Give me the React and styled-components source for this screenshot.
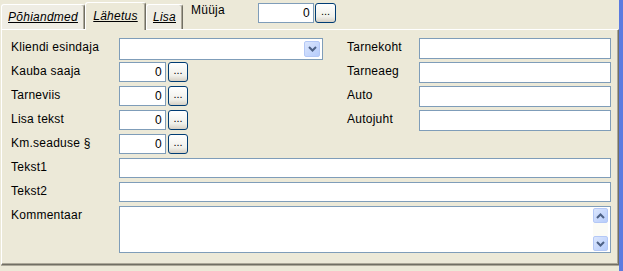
import React from 'react';
import styled, { createGlobalStyle } from 'styled-components';

const GlobalStyle = createGlobalStyle`
  body {
    margin: 0;
    background: #ece9d8;
    font-family: "Liberation Sans", Arial, sans-serif;
    font-size: 12px;
    letter-spacing: 0.25px;
    color: #000;
  }
`;

const Window = styled.div`
  width: 623px;
  height: 271px;
  box-sizing: border-box;
  border-right: 4px solid #5b7be0;
  background: #ece9d8;
  display: flex;
  flex-direction: column;
`;

const TopBar = styled.div`
  height: 29px;
  display: flex;
  align-items: flex-end;
  padding-left: 1px;
  position: relative;
  z-index: 1;
`;

const Tab = styled.div`
  box-sizing: border-box;
  width: ${p => p.$w}px;
  height: ${p => (p.$active ? 28 : 25)}px;
  margin-bottom: ${p => (p.$active ? -1 : 0)}px;
  padding-top: ${p => (p.$active ? 6 : 5)}px;
  text-align: center;
  line-height: 14px;
  font-style: italic;
  text-decoration: underline;
  background: ${p => (p.$active ? '#ece9d8' : '#efede4')};
  border-top: 1px solid #fff;
  border-left: 1px solid #fff;
  border-right: 1px solid #716f64;
  box-shadow: inset -1px 0 0 #aca899;
  border-radius: 3px 3px 0 0;
`;

const SellerBox = styled.div`
  align-self: flex-start;
  display: flex;
  align-items: flex-start;
  margin-left: 8px;
  padding-top: 3px;
`;

const SellerLabel = styled.span`
  width: 67px;
  line-height: 14px;
`;

const Panel = styled.div`
  margin-left: 1px;
  width: 618px;
  height: 236px;
  box-sizing: border-box;
  border-top: 1px solid #fff;
  border-left: 1px solid #fff;
  border-right: 1px solid #716f64;
  border-bottom: 1px solid #716f64;
  box-shadow: inset -1px -1px 0 #aca899, 0 1px 0 #aca899;
  padding: 8px 0 0 9px;
`;

const Form = styled.div`
  display: grid;
  grid-template-columns: 108px 228px 72px 192px;
  grid-template-rows: repeat(7, 24px) 47px;
  align-items: start;
`;

const Label = styled.div`
  line-height: 14px;
  padding-top: 2px;
  white-space: nowrap;
`;

const Input = styled.div`
  box-sizing: border-box;
  width: ${p => p.$w || 192}px;
  height: ${p => p.$h || 20}px;
  background: #fff;
  border: 1px solid #7f9db9;
  grid-column: ${p => p.$span || 'auto'};
`;

const NumInput = styled(Input)`
  text-align: right;
  padding: 2px 3px 0 0;
  line-height: 14px;
`;

const Group = styled.div`
  display: flex;
  gap: ${p => p.$gap ?? 2}px;
`;

const Dots = styled.div`
  box-sizing: border-box;
  width: ${p => p.$w || 20}px;
  height: 20px;
  border: 1px solid #003c74;
  border-radius: 3px;
  background: linear-gradient(#ffffff, #f0f0ea 70%, #d6d0c5);
  text-align: center;
  line-height: 14px;
  font-size: 11px;
  letter-spacing: 0;
`;

const Combo = styled.div`
  box-sizing: border-box;
  width: 204px;
  height: 22px;
  background: #fff;
  border: 1px solid #7f9db9;
  display: flex;
  justify-content: flex-end;
  padding: 2px 2px 0 0;
`;

const ArrowBtn = styled.div`
  box-sizing: border-box;
  width: 16px;
  height: 16px;
  border: 1px solid #b4c8f6;
  border-radius: 2px;
  background: linear-gradient(135deg, #dbe6fd, #b6ccfb);
  display: flex;
  align-items: center;
  justify-content: center;
`;

const TextArea = styled(Input)`
  display: flex;
  justify-content: flex-end;
  padding: 1px 2px 1px 0;
`;

const Scroll = styled.div`
  width: 15px;
  height: 43px;
  background: #fbfbf6;
  display: flex;
  flex-direction: column;
  justify-content: space-between;
`;

const ScrollBtn = styled(ArrowBtn)`
  width: 15px;
  height: 15px;
`;

const Chevron = ({ up }) => (
  <svg width="9" height="6" viewBox="0 0 9 6">
    <path
      d={up ? 'M1 5 L4.5 1.5 L8 5' : 'M1 1 L4.5 4.5 L8 1'}
      fill="none"
      stroke="#4d6185"
      strokeWidth="2"
    />
  </svg>
);

const NumField = ({ value = 0 }) => (
  <Group>
    <NumInput $w={47}>{value}</NumInput>
    <Dots>...</Dots>
  </Group>
);

export default function App() {
  return (
    <Window>
      <GlobalStyle />
      <TopBar>
        <Tab $w={84}>Põhiandmed</Tab>
        <Tab $w={61} $active>Lähetus</Tab>
        <Tab $w={37}>Lisa</Tab>
        <SellerBox>
          <SellerLabel>Müüja</SellerLabel>
          <Group $gap={1}>
            <NumInput $w={56}>0</NumInput>
            <Dots $w={21}>...</Dots>
          </Group>
        </SellerBox>
      </TopBar>
      <Panel>
        <Form>
          <Label>Kliendi esindaja</Label>
          <Combo>
            <ArrowBtn>
              <Chevron />
            </ArrowBtn>
          </Combo>
          <Label>Tarnekoht</Label>
          <Input $h={21} />

          <Label>Kauba saaja</Label>
          <NumField />
          <Label>Tarneaeg</Label>
          <Input $h={21} />

          <Label>Tarneviis</Label>
          <NumField />
          <Label>Auto</Label>
          <Input $h={21} />

          <Label>Lisa tekst</Label>
          <NumField />
          <Label>Autojuht</Label>
          <Input $h={21} />

          <Label>Km.seaduse §</Label>
          <NumField />
          <div />
          <div />

          <Label>Tekst1</Label>
          <Input $w={492} $span="2 / 5" />

          <Label>Tekst2</Label>
          <Input $w={492} $span="2 / 5" />

          <Label>Kommentaar</Label>
          <TextArea $w={492} $h={47} $span="2 / 5">
            <Scroll>
              <ScrollBtn>
                <Chevron up />
              </ScrollBtn>
              <ScrollBtn>
                <Chevron />
              </ScrollBtn>
            </Scroll>
          </TextArea>
        </Form>
      </Panel>
    </Window>
  );
}
